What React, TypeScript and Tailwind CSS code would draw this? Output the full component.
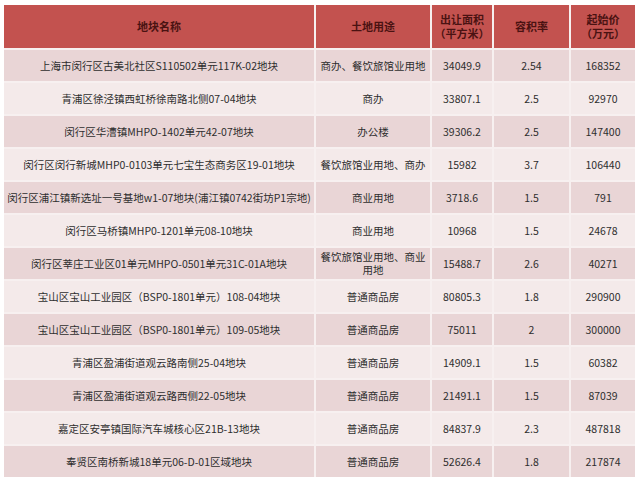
import React from "react";

const rows: [string, string, string, string, string][] = [
  ["上海市闵行区古美北社区S110502单元117K-02地块", "商办、餐饮旅馆业用地", "34049.9", "2.54", "168352"],
  ["青浦区徐泾镇西虹桥徐南路北侧07-04地块", "商办", "33807.1", "2.5", "92970"],
  ["闵行区华漕镇MHPO-1402单元42-07地块", "办公楼", "39306.2", "2.5", "147400"],
  ["闵行区闵行新城MHP0-0103单元七宝生态商务区19-01地块", "餐饮旅馆业用地、商办", "15982", "3.7", "106440"],
  ["闵行区浦江镇新选址一号基地w1-07地块(浦江镇0742街坊P1宗地)", "商业用地", "3718.6", "1.5", "791"],
  ["闵行区马桥镇MHP0-1201单元08-10地块", "商业用地", "10968", "1.5", "24678"],
  ["闵行区莘庄工业区01单元MHPO-0501单元31C-01A地块", "餐饮旅馆业用地、商业用地", "15488.7", "2.6", "40271"],
  ["宝山区宝山工业园区（BSP0-1801单元）108-04地块", "普通商品房", "80805.3", "1.8", "290900"],
  ["宝山区宝山工业园区（BSP0-1801单元）109-05地块", "普通商品房", "75011", "2", "300000"],
  ["青浦区盈浦街道观云路南侧25-04地块", "普通商品房", "14909.1", "1.5", "60382"],
  ["青浦区盈浦街道观云路西侧22-05地块", "普通商品房", "21491.1", "1.5", "87039"],
  ["嘉定区安亭镇国际汽车城核心区21B-13地块", "普通商品房", "84837.9", "2.3", "487818"],
  ["奉贤区南桥新城18单元06-D-01区域地块", "普通商品房", "52626.4", "1.8", "217874"],
];

export default function App() {
  return (
    <div
      className="w-[640px] h-[485px] bg-white pt-[5px] pl-[4px] overflow-hidden"
      style={{ fontFamily: '"Noto Sans CJK SC", "Noto Sans", sans-serif' }}
    >
      <div className="w-[631px] grid grid-cols-[310px_114px_60px_75px_64px] gap-x-[2px] gap-y-[2px] bg-[#f7f0f0]">
        <div className="h-[43px] bg-[#c3524f] flex items-center justify-center text-[11px] font-bold text-[#4a1212]">地块名称</div>
        <div className="h-[43px] bg-[#c3524f] flex items-center justify-center text-[11px] font-bold text-[#4a1212]">土地用途</div>
        <div className="h-[43px] bg-[#c3524f] flex flex-col items-center justify-center gap-[3px] text-[11px] leading-none font-bold text-[#4a1212]">
          <span>出让面积</span>
          <span>（平方米）</span>
        </div>
        <div className="h-[43px] bg-[#c3524f] flex items-center justify-center text-[11px] font-bold text-[#4a1212]">容积率</div>
        <div className="h-[43px] bg-[#c3524f] flex flex-col items-center justify-center gap-[3px] text-[11px] leading-none font-bold text-[#4a1212]">
          <span>起始价</span>
          <span>（万元）</span>
        </div>
        {rows.map((r, i) => {
          const bg = i % 2 === 0 ? "bg-[#e9d5d6]" : "bg-[#f4eaea]";
          return (
            <React.Fragment key={i}>
              {r.map((c, j) =>
                j === 1 && c === "餐饮旅馆业用地、商业用地" ? (
                  <div
                    key={j}
                    className={`h-[31px] ${bg} flex flex-col items-center justify-center gap-[2px] text-[10.5px] leading-none text-[#2e2e2e]`}
                  >
                    <span>餐饮旅馆业用地、商业</span>
                    <span>用地</span>
                  </div>
                ) : (
                  <div
                    key={j}
                    className={`h-[31px] ${bg} flex items-center justify-center text-center text-[10.5px] whitespace-nowrap text-[#2e2e2e]`}
                  >
                    {c}
                  </div>
                )
              )}
            </React.Fragment>
          );
        })}
      </div>
    </div>
  );
}
